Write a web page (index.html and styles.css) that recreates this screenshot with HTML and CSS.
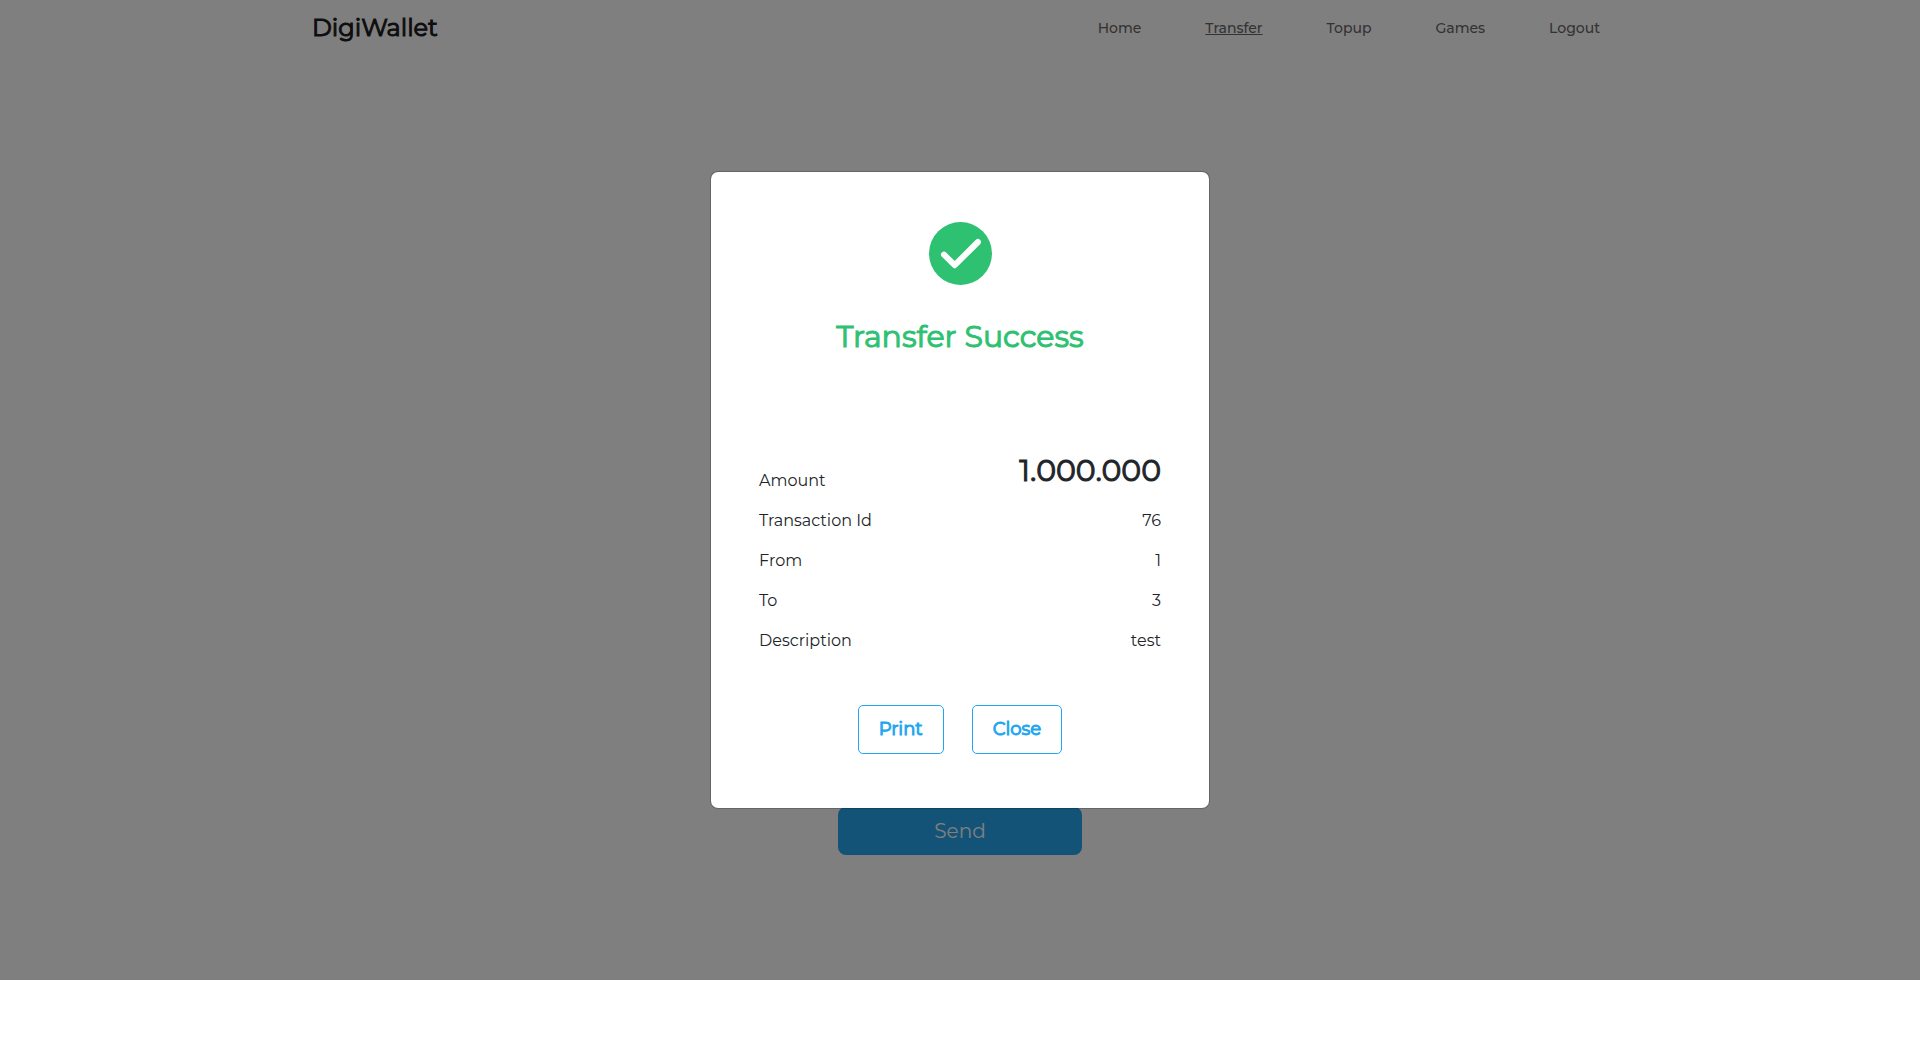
FILE: index.html
```html
<!DOCTYPE html>
<html lang="en">
<head>
  <meta charset="utf-8">
  <meta name="viewport" content="width=device-width, initial-scale=1">
  <title>DigiWallet</title>
  <link rel="stylesheet" href="styles.css">
</head>
<body>
  <div class="screen">
    <header class="navbar">
      <a class="brand" href="#">DigiWallet</a>
      <nav class="menu">
        <a class="menu-link" href="#">Home</a>
        <a class="menu-link active" href="#">Transfer</a>
        <a class="menu-link" href="#">Topup</a>
        <a class="menu-link" href="#">Games</a>
        <button class="menu-link" type="button">Logout</button>
      </nav>
    </header>
    <main class="content">
      <button class="send" type="button">Send</button>
    </main>
    <div class="overlay">
      <section class="modal" role="dialog" aria-modal="true" aria-labelledby="modal-title">
        <svg class="status-icon" viewBox="0 0 63 63" aria-hidden="true">
          <circle cx="31.500" cy="31.500" r="31.500" fill="#2ec171"/>
          <path d="M15 32.700 L25.700 43.200 L49 20" fill="none" stroke="#fff" stroke-width="6" stroke-linecap="round" stroke-linejoin="round"/>
        </svg>
        <h1 class="title" id="modal-title">Transfer Success</h1>
        <dl class="details">
          <div class="row row-amount"><dt>Amount</dt><dd class="amount">1.000.000</dd></div>
          <div class="row"><dt>Transaction Id</dt><dd>76</dd></div>
          <div class="row"><dt>From</dt><dd>1</dd></div>
          <div class="row"><dt>To</dt><dd>3</dd></div>
          <div class="row"><dt>Description</dt><dd>test</dd></div>
        </dl>
        <div class="actions">
          <button class="outline-button" type="button">Print</button>
          <button class="outline-button" type="button">Close</button>
        </div>
      </section>
    </div>
  </div>
</body>
</html>
```
FILE: styles.css
```css
*,
*::before,
*::after {
  box-sizing: border-box;
}

body {
  margin: 0;
  background: #fff;
  color: #212529;
  font-family: Montserrat, Inter, "Open Sans", sans-serif;
  font-size: 16px;
  line-height: 24px;
}

button {
  font-family: inherit;
  cursor: pointer;
}

.screen {
  position: relative;
  display: flex;
  flex-direction: column;
  min-height: calc(100vh - 58px);
}

.navbar {
  display: flex;
  align-items: center;
  justify-content: space-between;
  width: 100%;
  max-width: 1320px;
  margin: 0 auto;
  padding: 10px 20px 10px 12px;
}

.brand {
  color: #1c1c1c;
  font-size: 24px;
  font-weight: 400;
  line-height: 36px;
  text-decoration: none;
  -webkit-text-stroke: 1px currentColor;
}

.menu {
  display: flex;
  align-items: center;
  gap: 64px;
}

.menu-link {
  padding: 0;
  border: 0;
  background: none;
  color: #666;
  font-size: 14px;
  font-weight: 500;
  line-height: 24px;
  text-decoration: none;
}

.menu-link.active {
  text-decoration: underline;
}

.content {
  display: flex;
  flex: 1;
  flex-direction: column;
  align-items: center;
  justify-content: flex-end;
  padding-bottom: 125px;
}

.send {
  width: 244px;
  padding: 9px 16px;
  border: 0;
  border-radius: 8px;
  background: #24a6ee;
  color: #fff;
  font-size: 20px;
  font-weight: 400;
  line-height: 30px;
}

.overlay {
  position: absolute;
  inset: 0;
  display: flex;
  align-items: center;
  justify-content: center;
  background: rgba(0, 0, 0, 0.5);
}

.modal {
  display: flex;
  flex-direction: column;
  align-items: center;
  width: 100%;
  max-width: 500px;
  padding: 50px 48px 54px;
  border: 1px solid rgba(0, 0, 0, 0.2);
  border-radius: 8px;
  background: #fff;
  background-clip: padding-box;
}

.status-icon {
  width: 63px;
  height: 63px;
}

.title {
  margin: 33px 0 0;
  color: #2ec171;
  font-size: 30px;
  font-weight: 400;
  line-height: 38px;
  -webkit-text-stroke: 1px currentColor;
}

.details {
  align-self: stretch;
  margin: 95px 0 44px;
}

.row {
  display: flex;
  justify-content: space-between;
  line-height: 40px;
}

.row-amount {
  align-items: flex-end;
  padding-top: 10px;
}

.row dd {
  margin: 0;
}

.row .amount {
  align-self: flex-start;
  margin-top: -10px;
  font-size: 30px;
  font-weight: 400;
  -webkit-text-stroke: 1px currentColor;
}

.actions {
  display: flex;
  gap: 28px;
}

.outline-button {
  padding: 11px 20px 12px;
  border: 1px solid #22a6f0;
  border-radius: 5px;
  background: #fff;
  color: #22a6f0;
  font-size: 18px;
  font-weight: 400;
  line-height: 24px;
  -webkit-text-stroke: 1px currentColor;
}
```
